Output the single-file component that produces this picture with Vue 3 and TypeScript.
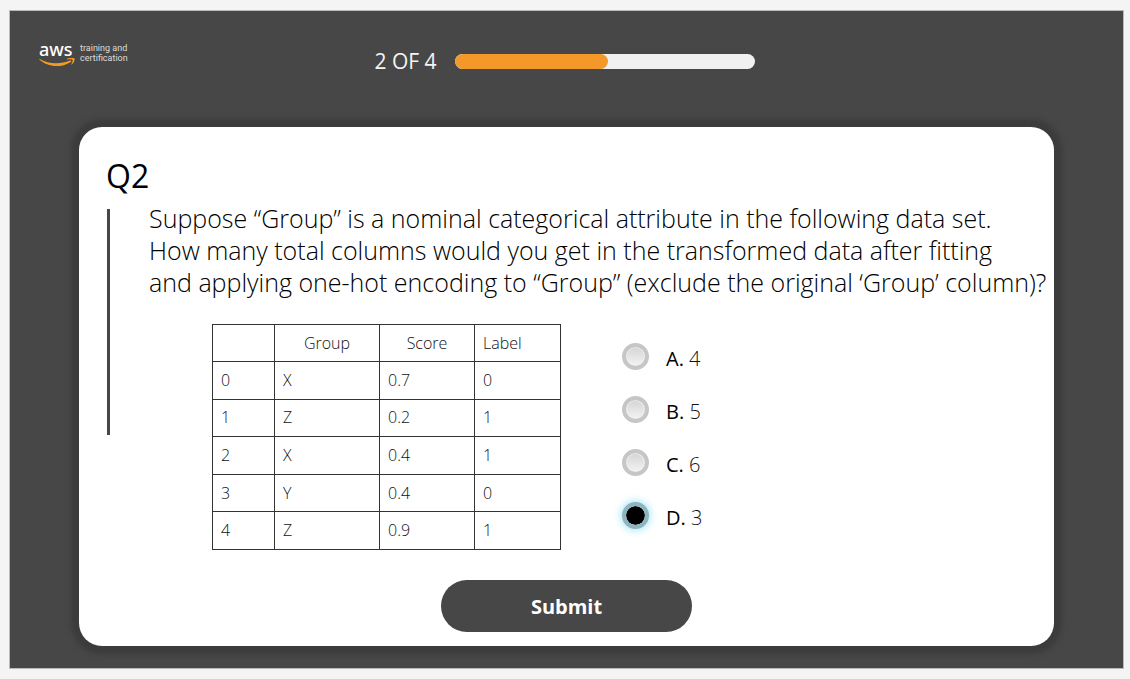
<script setup lang="ts">
import { computed, ref } from 'vue'

interface Row {
  id: number
  group: string
  score: string
  label: number
}

interface Option {
  key: string
  text: string
}

const current = 2
const total = 4
const progress = computed(() => `${(current / total) * 100 + 1}%`)

const lines: string[] = [
  'Suppose “Group” is a nominal categorical attribute in the following data set.',
  'How many total columns would you get in the transformed data after fitting',
  'and applying one-hot encoding to “Group” (exclude the original ‘Group’ column)?',
]

const rows: Row[] = [
  { id: 0, group: 'X', score: '0.7', label: 0 },
  { id: 1, group: 'Z', score: '0.2', label: 1 },
  { id: 2, group: 'X', score: '0.4', label: 1 },
  { id: 3, group: 'Y', score: '0.4', label: 0 },
  { id: 4, group: 'Z', score: '0.9', label: 1 },
]

const options: Option[] = [
  { key: 'A', text: '4' },
  { key: 'B', text: '5' },
  { key: 'C', text: '6' },
  { key: 'D', text: '3' },
]

const selected = ref('D')
</script>

<template>
  <main class="stage">
    <header class="top">
      <div class="logo">
        <div class="mark">
          <span class="aws">aws</span>
          <svg class="smile" viewBox="0 0 36 9" aria-hidden="true">
            <path d="M0.5 0.8 C9 6.2 21 6.8 31 2.6 C32.2 2.2 32.8 3.2 31.8 3.9 C22 10.2 8.5 9.4 0.3 1.6 Z" fill="#f79a1f" />
            <path d="M28.2 0.7 C31 -0.5 35 -0.3 35.5 0.5 C36 1.7 35 4.9 32.8 6.6 C32.3 6.9 32.2 6.6 32.4 6 C33.6 3.2 34 2.1 33.5 1.7 C32.8 1.2 30.5 1.3 28.4 1.5 C27.8 1.5 27.8 1 28.2 0.7 Z" fill="#f79a1f" />
          </svg>
        </div>
        <span class="tagline">training and<br />certification</span>
      </div>
      <div class="progress">
        <span class="count">{{ current }} OF {{ total }}</span>
        <div class="track" role="progressbar" aria-label="Quiz progress" :aria-valuenow="current" aria-valuemin="0" :aria-valuemax="total">
          <div class="fill" :style="{ width: progress }"></div>
        </div>
      </div>
    </header>

    <form class="card" @submit.prevent>
      <h1 class="title">Q2</h1>
      <div class="body">
        <div class="rule"></div>
        <div class="content">
          <p class="question">
            <span v-for="line in lines" :key="line" class="line">{{ line }}</span>
          </p>
          <div class="answer">
            <table class="data">
              <colgroup>
                <col class="c-id" />
                <col class="c-group" />
                <col class="c-score" />
                <col class="c-label" />
              </colgroup>
              <thead>
                <tr>
                  <th></th>
                  <th class="mid">Group</th>
                  <th class="mid">Score</th>
                  <th>Label</th>
                </tr>
              </thead>
              <tbody>
                <tr v-for="row in rows" :key="row.id">
                  <td>{{ row.id }}</td>
                  <td>{{ row.group }}</td>
                  <td>{{ row.score }}</td>
                  <td>{{ row.label }}</td>
                </tr>
              </tbody>
            </table>
            <div class="options" role="radiogroup" aria-label="Answer">
              <label v-for="option in options" :key="option.key" class="option">
                <input v-model="selected" class="radio" type="radio" name="answer" :value="option.key" />
                <span class="choice"><span class="key">{{ option.key }}.</span> {{ option.text }}</span>
              </label>
            </div>
          </div>
        </div>
      </div>
      <button class="submit" type="submit">Submit</button>
    </form>
  </main>
</template>

<style>
body {
  background: #f4f4f4;
}
</style>

<style scoped>
.stage {
  box-sizing: border-box;
  margin: 11px 7px 11px 10px;
  padding-bottom: 22px;
  background: #474747;
  box-shadow: 0 0 0 1px #b9bbba;
  font-family: "Open Sans", "Noto Sans", sans-serif;
}

.top {
  display: grid;
  grid-template-columns: 1fr auto 1fr;
  align-items: start;
  height: 116px;
  padding: 0 33px 0 29px;
  box-sizing: border-box;
}

.logo {
  display: flex;
  gap: 6px;
  padding-top: 32px;
}

.mark {
  width: 35px;
}

.aws {
  display: block;
  height: 15px;
  font-family: "Noto Sans", sans-serif;
  font-size: 18px;
  font-weight: 500;
  line-height: 12px;
  color: #fff;
}

.smile {
  display: block;
  width: 36px;
  height: 9px;
}

.tagline {
  font-family: Roboto, sans-serif;
  font-size: 9px;
  line-height: 10px;
  color: #dcdcdc;
}

.progress {
  display: flex;
  align-items: center;
  gap: 18px;
  padding-top: 35px;
}

.count {
  font-size: 21px;
  line-height: 30px;
  color: #f4f4f4;
}

.track {
  width: 300px;
  height: 15px;
  border-radius: 8px;
  background: #f1f1f1;
  overflow: hidden;
}

.fill {
  height: 100%;
  border-radius: 8px;
  background: #f3992a;
}

.card {
  margin: 0 69px;
  padding: 28px 0 14px 27px;
  border-radius: 23px;
  background: #fff;
  box-shadow: 0 0 5px 8px #3c3c3c;
}

.title {
  margin: 0;
  font-size: 32px;
  font-weight: 400;
  line-height: 42px;
  color: #000;
}

.body {
  display: flex;
  align-items: flex-start;
  gap: 39px;
  padding: 12px 0 0 1px;
}

.rule {
  flex: none;
  width: 3px;
  height: 226px;
  background: #474747;
}

.content {
  flex: 1;
}

.question {
  margin: 0;
  margin-top: -7px;
  font-size: 25px;
  font-weight: 300;
  line-height: 32px;
  color: #000;
}

.line {
  display: block;
  white-space: nowrap;
}

.answer {
  display: flex;
  align-items: flex-start;
  gap: 61px;
  margin-top: 26px;
  padding-left: 63px;
}

.data {
  flex: none;
  width: 348px;
  height: 226px;
  table-layout: fixed;
  border-collapse: collapse;
  font-size: 16px;
  font-weight: 300;
  line-height: 20px;
  color: #111;
}

.data tr {
  height: 37px;
}

.c-id {
  width: 62px;
}

.c-group {
  width: 105px;
}

.c-score {
  width: 95px;
}

.c-label {
  width: 86px;
}

.data th,
.data td {
  padding: 0 8px 1px;
  border: 1px solid #333;
  font-weight: 300;
  text-align: left;
}

.data .mid {
  text-align: center;
}

.options {
  padding-top: 6px;
}

.option {
  display: flex;
  align-items: center;
  gap: 17px;
  height: 53px;
}

.radio {
  appearance: none;
  box-sizing: border-box;
  width: 27px;
  height: 27px;
  margin: 0;
  border: 4px solid #c6c6c6;
  border-radius: 50%;
  background: linear-gradient(#d4d4d4, #f4f4f4);
  box-shadow: inset 0 0 0 1px #eee;
}

.radio:checked {
  border-color: #8eb4c0;
  background: #000;
  background-clip: padding-box;
  box-shadow: 0 0 10px 0 #86dcf2;
}

.choice {
  padding-top: 4px;
  font-size: 20px;
  font-weight: 300;
  line-height: 28px;
  color: #111;
}

.key {
  font-weight: 400;
  color: #000;
}

.submit {
  display: block;
  width: 251px;
  height: 52px;
  margin: 30px auto 0 335px;
  border: 0;
  border-radius: 26px;
  background: #474747;
  font-family: inherit;
  font-size: 20px;
  font-weight: 700;
  color: #fff;
}
</style>
